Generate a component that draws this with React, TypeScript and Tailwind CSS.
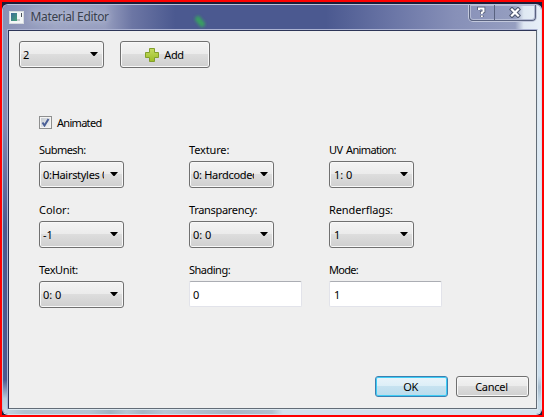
import type { ReactNode } from "react";

function Combo({ value, spacing = "", indent = "pl-[3px]", clip = "w-[61px]" }: { value: string; spacing?: string; indent?: string; clip?: string }) {
  return (
    <button className="flex h-[27px] w-[85px] items-center rounded-[3px] border border-[#707070] bg-[linear-gradient(#f3f3f3_0%,#ebebeb_49%,#dddddd_50%,#cfcfcf_100%)] shadow-[inset_0_0_0_1px_#f8f8f8]">
      <span className={`flex ${indent}`}>
        <span className={`block ${clip} overflow-hidden text-left leading-[16px] whitespace-nowrap ${spacing}`}>{value}</span>
      </span>
      <svg className="mr-[5px] mb-[1px] ml-auto shrink-0" width="8" height="4" viewBox="0 0 8 4">
        <path d="M0 0H8L4.5 4H3.5Z" fill="#000" />
      </svg>
    </button>
  );
}

function Field({ label, spacing = "", children }: { label: string; spacing?: string; children: ReactNode }) {
  return (
    <div className="flex h-[60px] flex-col items-start">
      <div className={`h-[19px] leading-[16px] whitespace-nowrap ${spacing}`}>{label}</div>
      {children}
    </div>
  );
}

function TextBox({ value, indent = "pl-[3px]" }: { value: string; indent?: string }) {
  return (
    <div className={`flex h-[26px] w-[113px] items-center rounded-[2px] border border-[#e2e3ea] border-t-[#abadb3] bg-white pt-[2px] ${indent}`}>
      {value}
    </div>
  );
}

export default function App() {
  return (
    <div className="h-[417px] w-[544px] overflow-hidden border-2 border-[#ff0000] bg-[#1b1e39] font-['Noto_Sans',sans-serif] text-[11px] text-black">
      <div className="flex h-[413px] w-[540px] flex-col pt-[2px]">
        <div className="flex h-[411px] flex-col overflow-hidden rounded-[6px] border border-[#d2e2ee] border-t-[#bdc1da] border-l-[#bdc1da] bg-[#4b5990]">
          <header className="flex h-[24px] shrink-0 items-center bg-[linear-gradient(90deg,#8890b5_0%,#9ea5c4_10%,#979ebf_19%,#6c76a4_24%,#4b5990_32%,#4b5990_60%,#6c77a7_73%,#8790b8_84%,#959ec0_95.2%,#dfe8f2_96.8%,#e7eff8_100%)]">
            <svg className="mt-[1px] ml-[6px] shrink-0" width="15" height="13" viewBox="0 0 15 13">
              <rect x=".5" y=".5" width="14" height="12" fill="#f3f6f7" stroke="#d7dce0" />
              <defs>
                <linearGradient id="ico" x1="0" y1="0" x2="1" y2="1">
                  <stop offset="0" stopColor="#3b6a98" />
                  <stop offset="1" stopColor="#46a377" />
                </linearGradient>
              </defs>
              <rect x="2" y="2" width="6" height="8" fill="url(#ico)" />
              <rect x="8" y="8" width="3" height="2" fill="#c7cdd1" />
              <path d="M12.5 2V6" stroke="#4a525a" />
            </svg>
            <h1 className="w-[83px] ml-[6.5px] text-[12px] leading-[20px] tracking-[-0.35px] whitespace-nowrap text-[#39404d] [text-shadow:0_0_6px_#bfc5da,0_0_9px_#bfc5da]">Material Editor</h1>
            <svg className="ml-[77px]" width="18" height="24" viewBox="0 0 18 24">
              <path d="M7 14L11 19" stroke="#37a75d" strokeWidth="6" strokeLinecap="round" opacity=".9" className="blur-[1.5px]" />
            </svg>
            <div className="mr-[5px] ml-auto flex h-[16px] w-[67px] self-start rounded-b-[4px] border border-t-0 border-[#59627f] shadow-[0_0_0_1px_#c2c8dc,inset_0_0_0_1px_#b4bbd4]">
              <div className="flex w-[25px] items-center justify-center border-r border-[#59627f]">
                <svg width="10" height="13" viewBox="0 0 10 13" fill="none">
                  <path d="M2 4V2.5H6.5V5.5L4.8 6.5V8M4.8 9.5V11" stroke="#4f5870" strokeWidth="3.6" />
                  <path d="M2 4V2.5H6.5V5.5L4.8 6.5V8M4.8 9.5V11" stroke="#fff" strokeWidth="2" />
                </svg>
              </div>
              <div className="flex flex-1 items-center justify-center">
                <svg width="12" height="11" viewBox="0 0 12 11" fill="none">
                  <path d="M3 2.5L9 8.5M9 2.5L3 8.5" stroke="#4f5870" strokeWidth="4.4" strokeLinecap="square" />
                  <path d="M3 2.5L9 8.5M9 2.5L3 8.5" stroke="#fff" strokeWidth="2.2" strokeLinecap="square" />
                </svg>
              </div>
            </div>
          </header>
          <div className="flex h-[381px] shrink-0">
            <div className="w-[4px] shrink-0 bg-[linear-gradient(#8b93ba_0%,#8088b4_25%,#4b5990_52%,#4b5990_92%,#b7cadb_97%,#c4d5e3_100%)]" />
            <main className="flex h-[381px] w-[531px] shrink-0 flex-col border border-[#dce8f1] border-t-[#abb2d2] border-l-[#aab2d2]">
              <div className="flex h-[379px] flex-col border border-[#626c77] border-t-[#2d3558] border-l-[#2d3558] bg-[#efefef]">
                <div className="flex gap-[16px] pt-[10px] pl-[10px]">
                  <Combo value="2" />
                  <button className="flex h-[27px] w-[90px] items-center justify-center gap-[4px] rounded-[3px] border border-[#707070] bg-[linear-gradient(#f3f3f3_0%,#ebebeb_49%,#dddddd_50%,#cfcfcf_100%)] shadow-[inset_0_0_0_1px_#f8f8f8]">
                    <svg width="16" height="16" viewBox="0 0 16 16">
                      <defs>
                        <linearGradient id="plus" x1="0" y1="0" x2="0" y2="1">
                          <stop offset="0" stopColor="#c4dc62" />
                          <stop offset="1" stopColor="#9cbd25" />
                        </linearGradient>
                      </defs>
                      <path d="M5.5 1.5H10.5V5.5H14.5V10.5H10.5V14.5H5.5V10.5H1.5V5.5H5.5Z" fill="url(#plus)" stroke="#829f2c" strokeLinejoin="round" />
                    </svg>
                    <span className="mr-[2px] leading-[16px] tracking-[-0.4px]">Add</span>
                  </button>
                </div>
                <label className="mt-[47px] flex h-[15px] items-center gap-[5px] pl-[30px]">
                  <span className="flex h-[13px] w-[13px] items-center justify-center border border-[#8e8f8f] bg-[#f4f4f4]">
                    <span className="flex h-[9px] w-[9px] items-center justify-center bg-[linear-gradient(135deg,#c5cbd2,#f3f4f5)]">
                      <svg width="9" height="9" viewBox="0 0 9 9" fill="none">
                        <path d="M1.5 4.5L3.5 7.5L7.5 1" stroke="#4a5f97" strokeWidth="2" />
                      </svg>
                    </span>
                  </span>
                  <span className="leading-[15px] tracking-[-0.7px]">Animated</span>
                </label>
                <div className="mt-[12px] grid grid-cols-[150px_140px_120px] pl-[30px]">
                  <Field label="Submesh:" spacing="tracking-[-0.55px]"><Combo value="0:Hairstyles 0" spacing="tracking-[-0.3px]" /></Field>
                  <Field label="Texture:" spacing="tracking-[-0.15px]"><Combo value="0: Hardcoded" spacing="tracking-[-0.3px]" /></Field>
                  <Field label="UV Animation:" spacing="tracking-[-0.65px] [word-spacing:1.5px]"><Combo value="1: 0" indent="pl-[4px]" /></Field>
                  <Field label="Color:"><Combo value="-1" /></Field>
                  <Field label="Transparency:" spacing="tracking-[-0.32px]"><Combo value="0: 0" /></Field>
                  <Field label="Renderflags:" spacing="tracking-[-0.1px]"><Combo value="1" indent="pl-[4px]" /></Field>
                  <Field label="TexUnit:" spacing="tracking-[-0.35px]"><Combo value="0: 0" /></Field>
                  <Field label="Shading:" spacing="tracking-[-0.5px]"><TextBox value="0" /></Field>
                  <Field label="Mode:" spacing="tracking-[-0.7px]"><TextBox value="1" indent="pl-[4px]" /></Field>
                </div>
                <div className="mt-auto mr-[7px] mb-[11px] flex justify-end gap-[8px]">
                  <button className="h-[21px] w-[73px] rounded-[3px] border border-[#3c7fb1] bg-[linear-gradient(#e9f4fa_0%,#dceef7_49%,#c6e2f0_50%,#b9dcec_100%)] pr-[2px] leading-[18px] tracking-[-0.4px] shadow-[inset_0_0_0_1px_#3ecdf5]">OK</button>
                  <button className="h-[21px] w-[73px] rounded-[3px] border border-[#707070] bg-[linear-gradient(#f3f3f3_0%,#ebebeb_49%,#dddddd_50%,#cfcfcf_100%)] pr-[2px] leading-[18px] tracking-[-0.25px] shadow-[inset_0_0_0_1px_#f8f8f8]">Cancel</button>
                </div>
              </div>
            </main>
            <div className="w-[3px] shrink-0 bg-[linear-gradient(#e8f0f8,#cddfed_85%,#cddfed_91%,#a9bdce_94%,#c9dce9_98%)]" />
          </div>
          <div className="flex-1 bg-[linear-gradient(90deg,#c4d5e3_0%,#b0c2d1_4%,#b3c5d4_16%,#9fb3c2_20%,#b5c6d4_23%,#a5b6c5_26%,#b7c7d5_30%,#a7b5c4_42%,#b0c1d0_50%,#d2e2ee_52%,#d2e2ee_100%)]" />
        </div>
      </div>
    </div>
  );
}
